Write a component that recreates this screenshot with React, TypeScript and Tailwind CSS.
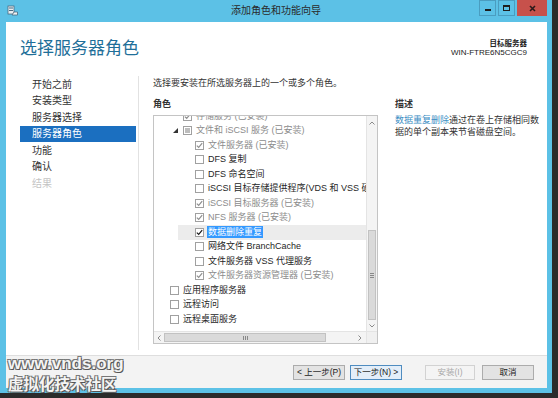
import React from "react";

type Mark = "none" | "gray" | "check" | "partial";

type Row = {
  level: 0 | 1 | 2;
  mark: Mark;
  text: string;
  gray?: boolean;
  open?: boolean;
  sel?: boolean;
};

const navItems = ["开始之前", "安装类型", "服务器选择", "服务器角色", "功能", "确认", "结果"];

const rows: Row[] = [
  { level: 1, mark: "gray", text: "存储服务 (已安装)", gray: true },
  { level: 1, mark: "partial", text: "文件和 iSCSI 服务 (已安装)", gray: true, open: true },
  { level: 2, mark: "gray", text: "文件服务器 (已安装)", gray: true },
  { level: 2, mark: "none", text: "DFS 复制" },
  { level: 2, mark: "none", text: "DFS 命名空间" },
  { level: 2, mark: "none", text: "iSCSI 目标存储提供程序(VDS 和 VSS 硬件提供程序)" },
  { level: 2, mark: "gray", text: "iSCSI 目标服务器 (已安装)", gray: true },
  { level: 2, mark: "gray", text: "NFS 服务器 (已安装)", gray: true },
  { level: 2, mark: "check", text: "数据删除重复", sel: true },
  { level: 2, mark: "none", text: "网络文件 BranchCache" },
  { level: 2, mark: "none", text: "文件服务器 VSS 代理服务" },
  { level: 2, mark: "gray", text: "文件服务器资源管理器 (已安装)", gray: true },
  { level: 0, mark: "none", text: "应用程序服务器" },
  { level: 0, mark: "none", text: "远程访问" },
  { level: 0, mark: "none", text: "远程桌面服务" },
];

const Box = ({ mark }: { mark: Mark }) => (
  <span className="w-[9px] h-[9px] border border-[#a0a0a0] bg-white flex items-center justify-center shrink-0">
    {mark === "gray" || mark === "check" ? (
      <svg width="7" height="7" viewBox="0 0 7 7">
        <path
          d="M0.8 3.6 L2.7 5.4 L6.2 1.2"
          fill="none"
          stroke={mark === "check" ? "#1a1a1a" : "#8f8f8f"}
          strokeWidth="1.2"
        />
      </svg>
    ) : null}
    {mark === "partial" ? <span className="w-[5px] h-[5px] bg-[#bdbdbd]" /> : null}
  </span>
);

const TreeRow = ({ row }: { row: Row }) => {
  const label = (
    <span
      className={
        row.sel
          ? "ml-[3px] px-[1px] bg-[#3399ff] text-white leading-[12px]"
          : row.gray
          ? "ml-[4px] text-[#8c8c8c]"
          : "ml-[4px] text-[#262626]"
      }
    >
      {row.text}
    </span>
  );

  if (row.sel) {
    return (
      <div className="h-[14.5px] flex pl-[24px]">
        <div className="flex-1 flex items-center bg-[#ececec] pl-[17px]">
          <Box mark={row.mark} />
          {label}
        </div>
      </div>
    );
  }

  return (
    <div
      className={
        row.level === 0
          ? "h-[14.5px] flex items-center pl-[16px]"
          : row.level === 1
          ? "h-[14.5px] flex items-center pl-[19px]"
          : "h-[14.5px] flex items-center pl-[41px]"
      }
    >
      {row.level === 1 ? (
        <span className="w-[10px] h-[9px] flex items-center justify-start shrink-0">
          {row.open ? (
            <svg width="5" height="5" viewBox="0 0 5 5">
              <path d="M5 0 L5 5 L0 5 Z" fill="#333" />
            </svg>
          ) : null}
        </span>
      ) : null}
      <Box mark={row.mark} />
      {label}
    </div>
  );
};

const ListBox = () => (
  <div className="w-[225px] h-[229px] border border-[#c4c4c4] flex flex-col bg-white">
    <div className="flex h-[215px]">
      <div className="flex-1 overflow-hidden whitespace-nowrap text-[9px]">
        <div className="-mt-[7px]">
          {rows.map((r, i) => (
            <TreeRow key={i} row={r} />
          ))}
        </div>
      </div>
      <div className="w-[11px] flex flex-col bg-[#f4f4f4] border-l border-[#e4e4e4]">
        <div className="h-[14px] flex items-center justify-center">
          <svg width="6" height="4" viewBox="0 0 6 4">
            <path d="M0.5 3.5 L3 1 L5.5 3.5" fill="none" stroke="#8a8a8a" strokeWidth="1" />
          </svg>
        </div>
        <div className="flex-1 flex flex-col justify-end">
          <div className="h-[90px] mx-[1px] bg-[#dadada] border border-[#c2c2c2] flex items-center justify-center">
            <div className="w-[4px] flex flex-col gap-[1px]">
              <span className="h-[1px] bg-[#888]" />
              <span className="h-[1px] bg-[#888]" />
              <span className="h-[1px] bg-[#888]" />
            </div>
          </div>
        </div>
        <div className="h-[11px] flex items-center justify-center">
          <svg width="6" height="4" viewBox="0 0 6 4">
            <path d="M0.5 0.5 L3 3 L5.5 0.5" fill="none" stroke="#8a8a8a" strokeWidth="1" />
          </svg>
        </div>
      </div>
    </div>
    <div className="h-[12px] flex bg-[#f4f4f4] border-t border-[#e4e4e4]">
      <div className="w-[10px] flex items-center justify-center">
        <svg width="4" height="6" viewBox="0 0 4 6">
          <path d="M3.5 0.5 L1 3 L3.5 5.5" fill="none" stroke="#8a8a8a" strokeWidth="1" />
        </svg>
      </div>
      <div className="w-[162px] my-[1px] bg-[#dadada] border border-[#c2c2c2] flex items-center justify-center">
        <div className="h-[4px] flex gap-[1px]">
          <span className="w-[1px] bg-[#888]" />
          <span className="w-[1px] bg-[#888]" />
          <span className="w-[1px] bg-[#888]" />
        </div>
      </div>
      <div className="flex-1 flex items-center justify-end pr-[4px]">
        <svg width="4" height="6" viewBox="0 0 4 6">
          <path d="M0.5 0.5 L3 3 L0.5 5.5" fill="none" stroke="#8a8a8a" strokeWidth="1" />
        </svg>
      </div>
      <div className="w-[11px] bg-[#f0f0f0] border-l border-[#e4e4e4]" />
    </div>
  </div>
);

const TitleBar = () => (
  <div className="h-[22px] grid grid-cols-[1fr_auto_1fr] items-start">
    <div className="pl-[7px] pt-[5px]">
      <svg width="11" height="11" viewBox="0 0 11 11">
        <rect x="1" y="1" width="6" height="8" fill="#e8eef2" stroke="#4a6a80" strokeWidth="0.8" />
        <rect x="2" y="2.5" width="4" height="1" fill="#4a6a80" />
        <rect x="2" y="5" width="4" height="1" fill="#4a6a80" />
        <path d="M5 10 L10.5 10 L10.5 7 L7 7 Z" fill="#f2f2f2" stroke="#4a6a80" strokeWidth="0.8" />
      </svg>
    </div>
    <div className="pt-[5px] text-[10px] leading-[12px] text-[#2a2a2a]">添加角色和功能向导</div>
    <div className="flex justify-end gap-[2px] pr-[5px]">
      <div className="w-[17px] h-[16px] border border-[#4a9dc0] flex items-end justify-center pb-[4px]">
        <span className="w-[6px] h-[2px] bg-[#1e1e1e]" />
      </div>
      <div className="w-[17px] h-[16px] border border-[#4a9dc0] flex items-center justify-center">
        <span className="w-[7px] h-[6px] border border-[#1e1e1e] border-t-2" />
      </div>
      <div className="w-[30px] h-[16px] bg-[#c7514b] flex items-center justify-center">
        <svg width="7" height="7" viewBox="0 0 7 7">
          <path d="M1 1 L6 6 M6 1 L1 6" stroke="#2b1a1a" strokeWidth="1.6" />
        </svg>
      </div>
    </div>
  </div>
);

const Btn = ({ label, kind }: { label: string; kind?: "default" | "disabled" }) => (
  <div
    className={
      kind === "default"
        ? "h-[15px] w-[52px] flex items-center justify-center text-[8.5px] border border-[#4f8cc0] bg-[#e3eef9] text-[#222]"
        : kind === "disabled"
        ? "h-[15px] w-[50px] flex items-center justify-center text-[8.5px] border border-[#d2d2d2] bg-[#f4f4f4] text-[#a8a8a8]"
        : "h-[15px] w-[52px] flex items-center justify-center text-[8.5px] border border-[#acacac] bg-[#e3e3e3] text-[#222]"
    }
  >
    {label}
  </div>
);

export default function App() {
  return (
    <div className="relative w-[558px] h-[398px] bg-[#2b2b2b] font-['Liberation_Sans','Noto_Sans_CJK_SC',sans-serif] overflow-hidden">
      <div className="w-[552px] h-[393px] bg-[#5cc1e6] flex flex-col">
        <TitleBar />
        <div className="flex-1 flex pl-[6px] pr-[5px] pb-[5px]">
          <div className="flex-1 flex flex-col bg-white">
            {/* header */}
            <div className="h-[54px] flex justify-between pl-[14px] pr-[20px]">
              <div className="pt-[17px] text-[17px] leading-[20px] text-[#1f6f99]">选择服务器角色</div>
              <div className="pt-[18px] text-right text-[#222]">
                <div className="text-[7.5px] leading-[8px] font-bold">目标服务器</div>
                <div className="text-[8px] leading-[10px]">WIN-FTRE6N5CGC9</div>
              </div>
            </div>

            {/* body */}
            <div className="flex-1 flex">
              <div className="w-[133px] border-r border-[#e2e2e2] mb-[5px]">
                {navItems.map((n, i) => (
                  <div
                    key={n}
                    className={
                      i === 3
                        ? "ml-[14px] mr-[2px] h-[16.5px] flex items-center pl-[12px] text-[10px] bg-[#1b6fc0] text-white"
                        : i === 6
                        ? "ml-[14px] mr-[2px] h-[16.5px] flex items-center pl-[12px] text-[10px] text-[#c4c4c4]"
                        : "ml-[14px] mr-[2px] h-[16.5px] flex items-center pl-[12px] text-[10px] text-[#333]"
                    }
                  >
                    {n}
                  </div>
                ))}
              </div>

              <div className="flex-1 pl-[14px] flex flex-col">
                <div className="pt-[1px] text-[9px] leading-[12px] text-[#333]">
                  选择要安装在所选服务器上的一个或多个角色。
                </div>
                <div className="flex mt-[9px]">
                  <div className="flex flex-col">
                    <div className="text-[9px] leading-[12px] font-bold text-[#333] mb-[5px]">角色</div>
                    <ListBox />
                  </div>
                  <div className="ml-[17px] flex flex-col text-[9px] leading-[12px] text-[#333]">
                    <div className="font-bold">描述</div>
                    <div className="mt-[4px] whitespace-nowrap">
                      <span className="text-[#3b8ec4]">数据重复删除</span>通过在卷上存储相同数
                    </div>
                    <div className="whitespace-nowrap">据的单个副本来节省磁盘空间。</div>
                  </div>
                </div>
              </div>
            </div>

            {/* buttons */}
            <div className="h-[33px] bg-[#f3f3f3] border-t border-[#dedede] flex justify-end items-start pt-[9px] pr-[13px]">
              <Btn label="< 上一步(P)" />
              <div className="ml-[5px]">
                <Btn label="下一步(N) >" kind="default" />
              </div>
              <div className="ml-[23px]">
                <Btn label="安装(I)" kind="disabled" />
              </div>
              <div className="ml-[7px]">
                <Btn label="取消" />
              </div>
            </div>
          </div>
        </div>
      </div>

      {/* watermark */}
      <div className="absolute left-[8px] top-[355px] text-[17px] leading-[17px] font-bold text-[#f4f4f4] [text-shadow:1px_1px_0_#555,-1px_-1px_0_#777,1px_-1px_0_#777,-1px_1px_0_#777]">
        www.vnds.org
      </div>
      <div className="absolute left-[8px] top-[377px] text-[15.5px] leading-[16px] font-bold text-[#f4f4f4] [text-shadow:1px_1px_0_#555,-1px_-1px_0_#777,1px_-1px_0_#777,-1px_1px_0_#777]">
        虚拟化技术社区
      </div>
    </div>
  );
}
